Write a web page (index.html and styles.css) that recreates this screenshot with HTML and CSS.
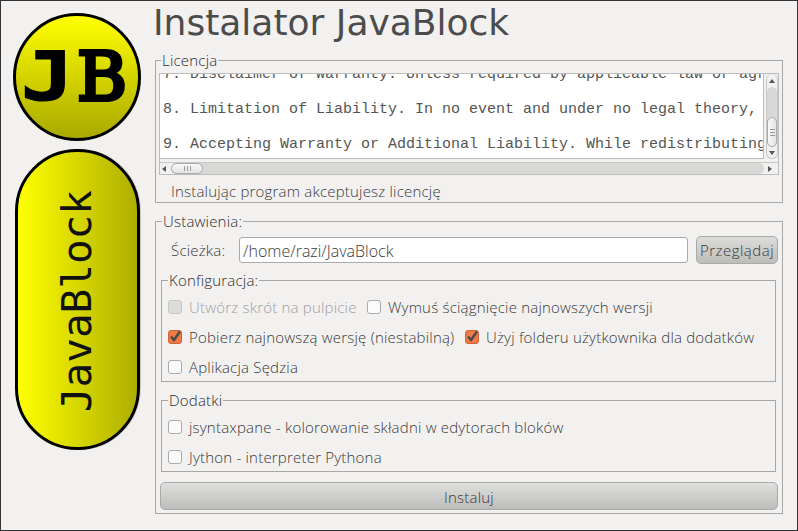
FILE: index.html
```html
<!DOCTYPE html>
<html lang="pl">
<head>
<meta charset="utf-8">
<title>Instalator JavaBlock</title>
<link rel="stylesheet" href="styles.css">
</head>
<body>
<div class="window">
  <aside class="side">
    <div class="logo-circle"><span class="logo-j">J</span><span class="logo-b">B</span></div>
    <div class="logo-pill"><span>JavaBlock</span></div>
  </aside>
  <main class="main">
    <h1 class="title">Instalator JavaBlock</h1>
    <fieldset class="group licence">
      <legend>Licencja</legend>
      <div class="scroller">
        <div class="scroll-top">
          <div class="textview">
            <div class="textclip">
              <p>7. Disclaimer of Warranty. Unless required by applicable law or agreed to in writing</p>
              <p>8. Limitation of Liability. In no event and under no legal theory, whether in tort</p>
              <p>9. Accepting Warranty or Additional Liability. While redistributing the Work</p>
            </div>
          </div>
          <div class="vbar">
            <i class="arrow up"></i>
            <div class="vtrack"><div class="vthumb"><b class="grip-v"></b></div></div>
            <i class="arrow down"></i>
          </div>
        </div>
        <div class="hbar">
          <i class="arrow left"></i>
          <div class="htrack"><div class="hthumb"><b class="grip-h"></b></div></div>
          <i class="arrow right"></i>
        </div>
      </div>
      <p class="note">Instalując program akceptujesz licencję</p>
    </fieldset>
    <fieldset class="group settings">
      <legend>Ustawienia:</legend>
      <div class="path-row">
        <label class="path-label">Ścieżka:</label>
        <div class="path-input">/home/razi/JavaBlock</div>
        <button class="browse">Przeglądaj</button>
      </div>
      <fieldset class="group inner config">
        <legend>Konfiguracja:</legend>
        <div class="row">
          <span class="check disabled"></span><span class="lbl dim w1">Utwórz skrót na pulpicie</span>
          <span class="check"></span><span class="lbl">Wymuś ściągnięcie najnowszych wersji</span>
        </div>
        <div class="row">
          <span class="check on"><svg viewBox="0 0 14 14"><path d="M3 6.5 6 10 12 1.5" fill="none" stroke="#4a4a4a" stroke-width="2.4"/></svg></span><span class="lbl w2">Pobierz najnowszą wersję (niestabilną)</span>
          <span class="check on"><svg viewBox="0 0 14 14"><path d="M3 6.5 6 10 12 1.5" fill="none" stroke="#4a4a4a" stroke-width="2.4"/></svg></span><span class="lbl">Użyj folderu użytkownika dla dodatków</span>
        </div>
        <div class="row">
          <span class="check"></span><span class="lbl">Aplikacja Sędzia</span>
        </div>
      </fieldset>
      <fieldset class="group inner addons">
        <legend>Dodatki</legend>
        <div class="row"><span class="check"></span><span class="lbl">jsyntaxpane - kolorowanie składni w edytorach bloków</span></div>
        <div class="row"><span class="check"></span><span class="lbl">Jython - interpreter Pythona</span></div>
      </fieldset>
      <button class="install">Instaluj</button>
    </fieldset>
  </main>
</div>
</body>
</html>
```
FILE: styles.css
```css
* { box-sizing: border-box; }
html, body { margin: 0; padding: 0; }
body { width: 798px; height: 531px; overflow: hidden; }
.window {
  width: 798px; height: 531px;
  background: #f2f1f0;
  border: 1px solid #333;
  display: flex;
  font-family: "Open Sans", "Lato", sans-serif;
  font-weight: 300;
  font-size: 15px;
  letter-spacing: .2px;
  color: #3a3a3a;
  overflow: hidden;
}
.side {
  width: 154px;
  padding: 12px 0 0 12px;
  display: flex;
  flex-direction: column;
  flex: none;
  letter-spacing: 0;
}
.logo-circle {
  width: 128px; height: 128px;
  border-radius: 50%;
  border: 3px solid #000;
  background: linear-gradient(#ffff00, #a9a900);
  display: flex; align-items: center; justify-content: center;
  color: #000;
  line-height: 1;
}
.logo-j { display: block; font-family: "DejaVu Sans Mono", monospace; font-weight: 700; font-size: 68px; -webkit-text-stroke: 1px #000; transform: scaleX(1.3); margin-right: 9px; }
.logo-b { display: block; font-family: "DejaVu Serif", serif; font-weight: 400; font-size: 68px; -webkit-text-stroke: 4px #000; }
.logo-pill {
  width: 125px; height: 301px;
  margin: 8px 0 0 2px;
  padding-top: 3px;
  border-radius: 62px;
  border: 3px solid #000;
  background: linear-gradient(90deg, #ffff00, #aeae00);
  box-shadow: 1px 0 1px rgba(0,0,0,.15);
  display: flex; align-items: center; justify-content: center;
  font-family: "DejaVu Sans Mono", monospace;
  font-weight: 400;
  font-size: 41px;
  color: #111;
}
.logo-pill span { writing-mode: vertical-rl; transform: rotate(180deg); line-height: 1; }
.main { flex: none; width: 628px; display: flex; flex-direction: column; }
.title {
  margin: 0 0 0 -2px;
  font-family: "DejaVu Sans", sans-serif;
  font-weight: 400;
  font-size: 36px;
  line-height: 44px;
  letter-spacing: 0;
  color: #4c4c4c;
}
.group {
  margin: 0;
  border: 1px solid #a8a8a8;
  padding: 0;
  min-width: 0;
}
.group legend {
  margin-left: 2px;
  padding: 0 1px;
  font-size: 15px;
  line-height: 16px;
  color: #2c2c2c;
}
.group.inner legend { margin-left: 0; }
.licence { margin-top: 7px; height: 151px; padding: 5px 3px 0 3px; }
.scroller { width: 620px; height: 102px; border: 1px solid #bdbdbd; display: flex; flex-direction: column; }
.scroll-top { flex: none; height: 88px; display: flex; align-items: flex-start; }
.textview { width: 604px; height: 85px; background: #fff; border-bottom: 1px solid #bdbdbd; border-right: 1px solid #bdbdbd; overflow: hidden; }
.textclip { margin-top: -8px; padding-left: 3px; white-space: nowrap; font-family: "Liberation Mono", monospace; font-weight: 400; font-size: 15px; letter-spacing: 0; line-height: 17.5px; color: #555; }
.textclip p { margin: 0 0 17.5px; }
.vbar { flex: 1; height: 85px; margin-left: 2px; display: flex; flex-direction: column; align-items: center; border: 1px solid #c8c8c8; border-width: 0 1px 1px; border-radius: 6px; }
.vtrack { flex: 1; width: 100%; background: #d8d8d6; margin: 1px 0; border-radius: 6px; display: flex; align-items: flex-end; }
.vthumb { width: 100%; height: 30px; background: linear-gradient(90deg, #f8f8f7, #e4e4e2); border: 1px solid #aaa; border-radius: 6px; display: flex; align-items: center; justify-content: center; }
.grip-v { display: block; width: 5px; height: 7px; background: repeating-linear-gradient(#999 0 1px, transparent 1px 3px); }
.hbar { flex: none; height: 12px; border-top: 1px solid #c8c8c8; display: flex; align-items: center; padding: 0 1px 0 2px; }
.htrack { flex: 1; height: 11px; background: #d8d8d6; border-radius: 6px; margin: 0 4px 0 5px; }
.hthumb { width: 32px; height: 11px; background: linear-gradient(#f8f8f7, #e4e4e2); border: 1px solid #aaa; border-radius: 6px; display: flex; align-items: center; justify-content: center; }
.grip-h { display: block; width: 7px; height: 5px; background: repeating-linear-gradient(90deg, #999 0 1px, transparent 1px 3px); }
.arrow { display: block; width: 0; height: 0; flex: none; border: 3px solid transparent; }
.arrow.up { border-bottom: 4px solid #555; border-top-width: 0; margin: 5px 0 3px; }
.arrow.down { border-top: 4px solid #555; border-bottom-width: 0; margin: 3px 0 3px; }
.arrow.left { border-right: 4px solid #555; border-left-width: 0; }
.arrow.right { border-left: 4px solid #555; border-right-width: 0; margin-right: 5px; }
.note { margin: 8px 0 0 12px; line-height: 16px; }
.settings { margin-top: 10px; height: 301px; padding: 7px 3px 0 4px; }
.path-row { display: flex; align-items: center; height: 28px; }
.path-label { margin-left: 11px; width: 68px; }
.path-input { width: 449px; height: 26px; background: #fff; border: 1px solid #aaa; border-radius: 3px; padding: 1px 3px 0; line-height: 24px; font-size: 16px; letter-spacing: 0; }
.browse { margin-left: 8px; width: 82px; height: 28px; padding: 0; border: 1px solid #aaa; border-radius: 5px; background: linear-gradient(#dcdcda, #bdbdbb); font: inherit; letter-spacing: .5px; color: #3a3a3a; }
.inner { width: 615px; margin-left: 1px; }
.config { margin-top: 8px; height: 110px; padding: 4px 6px 0; }
.addons { margin-top: 10px; height: 80px; padding: 4px 6px 0; }
.row { display: flex; align-items: center; height: 30px; }
.check { flex: none; width: 14px; height: 14px; background: #fbfbfb; border: 1px solid #aaa; border-radius: 3px; display: block; }
.check svg { display: block; width: 14px; height: 14px; margin: -1px; }
.check.disabled { background: #dcdcda; border-color: #c8c8c8; }
.check.on { background: #ef7a45; border-color: #c9653a; }
.lbl { margin-left: 7px; white-space: nowrap; }
.w1 { width: 178px; }
.w2 { width: 276px; }
.dim { color: #a0a0a0; }
.install {
  display: block; width: 618px; height: 28px; margin: 10px 0 0 0; padding: 2px 0 0;
  border: 1px solid #aaa; border-radius: 5px;
  background: linear-gradient(#e0e0de, #bcbcba);
  font: inherit; letter-spacing: .2px; color: #3a3a3a;
}
```
